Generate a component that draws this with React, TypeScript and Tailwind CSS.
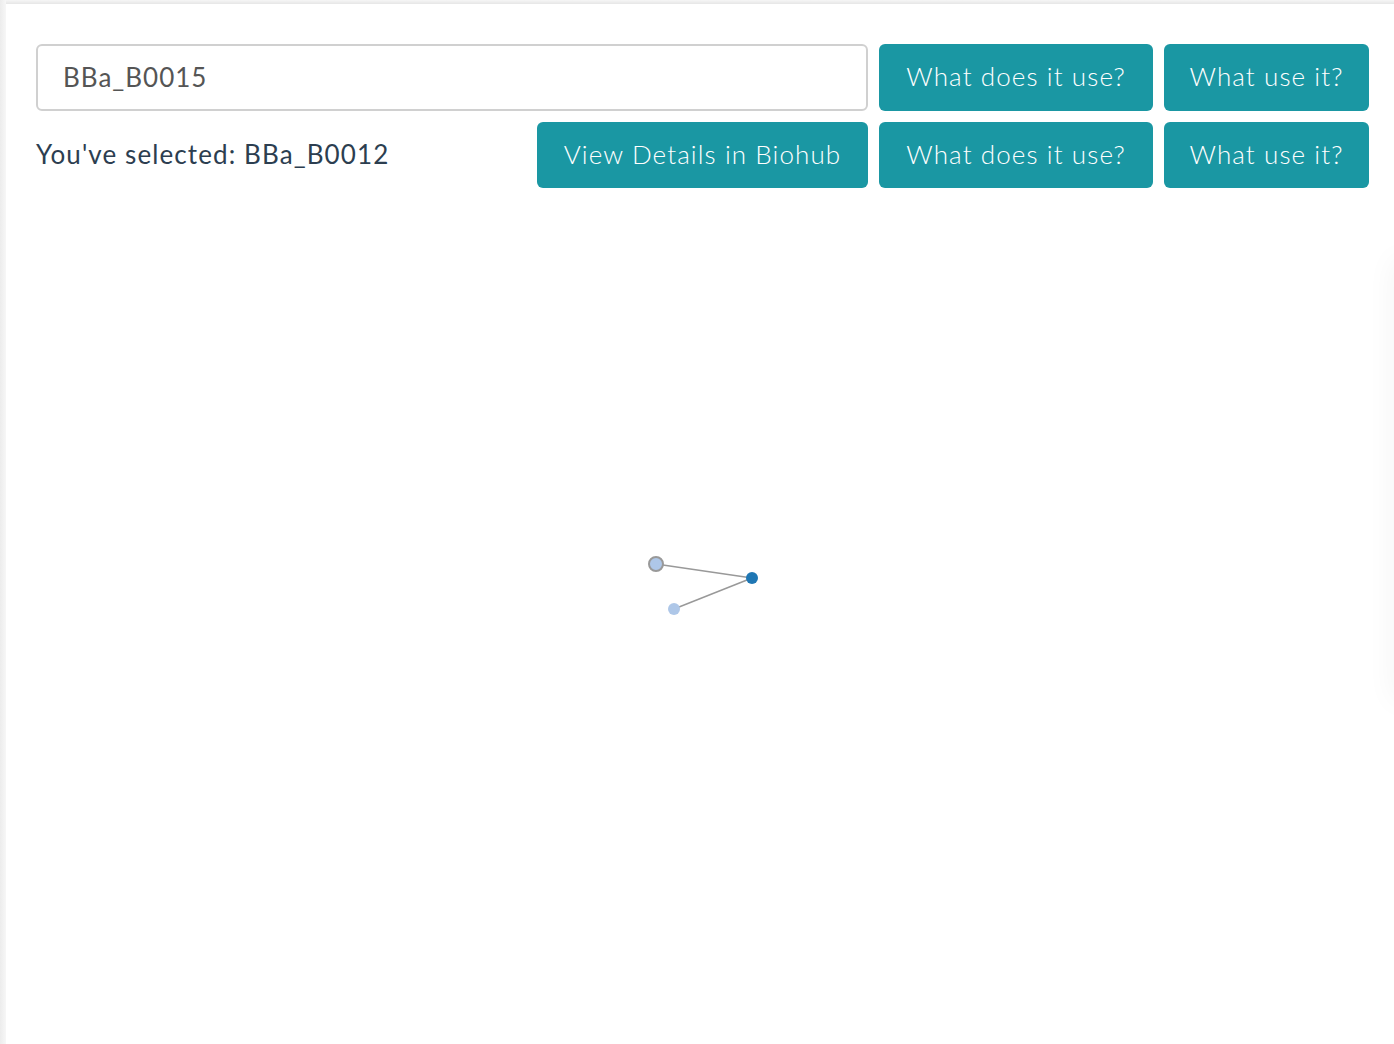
import { useState } from "react";

export default function App() {
  const [query, setQuery] = useState("BBa_B0015");
  const selected = "BBa_B0012";

  const btn =
    "h-full rounded-[6px] bg-[#1a97a3] text-white text-[26px] font-light leading-none tracking-[1.1px] pb-[3px] flex items-center justify-center";

  return (
    <div
      className="relative w-[1394px] h-[1044px] overflow-hidden bg-white flex"
      style={{ fontFamily: "Lato, 'Open Sans', sans-serif" }}
    >
      <div className="w-[6px] h-full bg-gradient-to-r from-[#ececec] to-[#f7f7f7] shrink-0" />
      <div className="flex-1 flex flex-col">
        <div className="h-[4px] bg-gradient-to-b from-[#f6f6f6] to-[#e6e6e6] shrink-0" />
        <div className="pl-[30px] pr-[24px] pt-[40px] flex flex-col gap-[11px]">
          <div className="flex gap-[11px] h-[67px]">
            <input
              value={query}
              onChange={e => setQuery(e.target.value)}
              className="w-[832px] h-full rounded-[6px] border-2 border-[#d0d0d0] px-[25px] pb-[2px] text-[26px] tracking-[1px] text-[#555] outline-none"
            />
            <button className={`${btn} w-[274px]`}>What does it use?</button>
            <button className={`${btn} w-[205px]`}>What use it?</button>
          </div>
          <div className="flex gap-[11px] h-[66px] items-center">
            <div className="w-[490px] pb-[2px] text-[26px] tracking-[1.1px] text-[#2c3e50]">You've selected: {selected}</div>
            <button className={`${btn} w-[331px]`}>View Details in Biohub</button>
            <button className={`${btn} w-[274px]`}>What does it use?</button>
            <button className={`${btn} w-[205px]`}>What use it?</button>
          </div>
        </div>
      </div>

      {/* force graph */}
      <svg className="absolute left-0 top-0" width="1394" height="1044">
        <line x1="656" y1="564" x2="752" y2="578" stroke="#999" strokeWidth="1.5" />
        <line x1="674" y1="609" x2="752" y2="578" stroke="#999" strokeWidth="1.5" />
        <circle cx="656" cy="564" r="7" fill="#aec7e8" stroke="#999" strokeWidth="2" />
        <circle cx="752" cy="578" r="6" fill="#1f77b4" />
        <circle cx="674" cy="609" r="6" fill="#aec7e8" />
      </svg>

      {/* faint shadow of offscreen panel */}
      <div className="absolute right-[-30px] top-[260px] w-[30px] h-[440px] shadow-[0_0_30px_rgba(0,0,0,0.05)]" />
    </div>
  );
}
